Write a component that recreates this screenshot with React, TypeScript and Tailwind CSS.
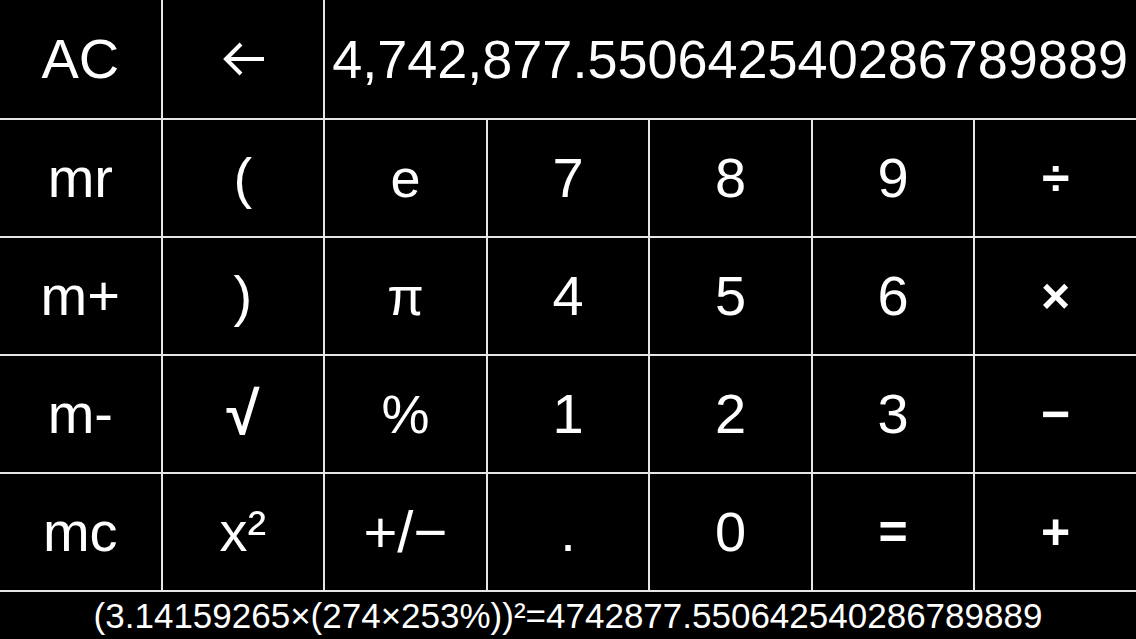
import React from 'react'

type Key = { label: React.ReactNode; cls: string }

const font = { fontFamily: '"Liberation Sans", Arial, sans-serif' }

function BackArrow() {
  return (
    <svg width="46" height="38" viewBox="0 0 46 38" fill="none" stroke="white" strokeWidth="4" strokeLinecap="butt">
      <path d="M44 19H6" />
      <path d="M21 4L6 19l15 15" />
    </svg>
  )
}

const mem = 'text-[56px]'
const dig = 'text-[56px]'
const op = 'text-[50px] font-bold'

const rows: Key[][] = [
  [
    { label: 'mr', cls: mem },
    { label: '(', cls: 'text-[56px]' },
    { label: 'e', cls: 'text-[54px]' },
    { label: '7', cls: dig },
    { label: '8', cls: dig },
    { label: '9', cls: dig },
    { label: '÷', cls: op },
  ],
  [
    { label: 'm+', cls: mem },
    { label: ')', cls: 'text-[56px]' },
    { label: 'π', cls: 'text-[53px]' },
    { label: '4', cls: dig },
    { label: '5', cls: dig },
    { label: '6', cls: dig },
    { label: '×', cls: op },
  ],
  [
    { label: 'm-', cls: mem },
    { label: '√', cls: 'text-[60px] font-bold' },
    { label: '%', cls: 'text-[54px]' },
    { label: '1', cls: dig },
    { label: '2', cls: dig },
    { label: '3', cls: dig },
    { label: '−', cls: op },
  ],
  [
    { label: 'mc', cls: mem },
    { label: 'x²', cls: mem },
    { label: '+/−', cls: 'text-[58px]' },
    { label: '.', cls: dig },
    { label: '0', cls: dig },
    { label: '=', cls: op },
    { label: '+', cls: op },
  ],
]

export default function App() {
  return (
    <div className="w-[1136px] h-[639px] bg-black text-white flex flex-col overflow-hidden select-none" style={font}>
      <div className="grid grid-cols-7 grid-rows-[118px_repeat(4,116px)] gap-[2px] bg-[#e6e6e6] pb-[2px]">
        <button className="bg-black flex items-center justify-center text-[56px] leading-none">AC</button>
        <button className="bg-black flex items-center justify-center">
          <BackArrow />
        </button>
        <div className="col-span-5 bg-black flex items-center justify-end pr-2 text-[54px] leading-none whitespace-nowrap overflow-hidden">
          4,742,877.550642540286789889
        </div>
        {rows.flat().map((k, i) => (
          <button key={i} className={`bg-black flex items-center justify-center leading-none ${k.cls}`}>
            {k.label}
          </button>
        ))}
      </div>
      <div className="flex-1 flex items-center justify-center text-[35px] leading-none whitespace-nowrap">
        (3.14159265×(274×253%))²=4742877.550642540286789889
      </div>
    </div>
  )
}
